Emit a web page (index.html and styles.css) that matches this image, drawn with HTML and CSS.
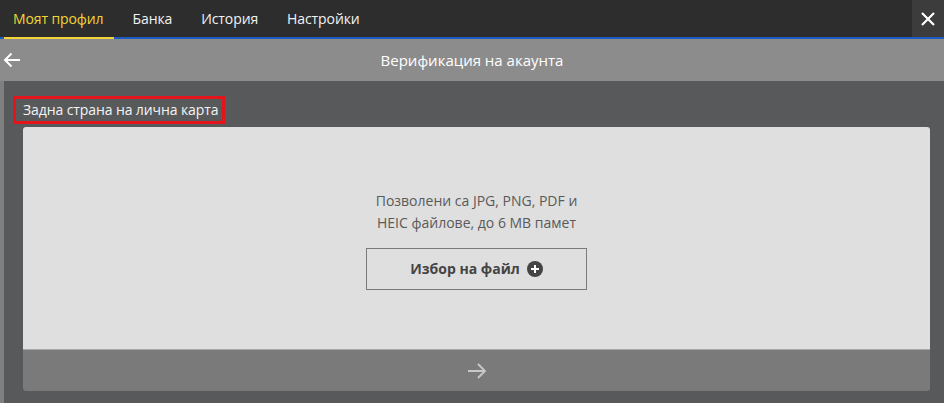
FILE: index.html
```html
<!DOCTYPE html>
<html lang="bg">
<head>
    <meta charset="UTF-8">
    <meta name="viewport" content="width=device-width, initial-scale=1.0">
    <title>Верификация на акаунта</title>
    <link rel="stylesheet" href="styles.css">
</head>
<body>
    <nav class="tabs">
        <a href="#" class="tab active">Моят профил</a>
        <a href="#" class="tab">Банка</a>
        <a href="#" class="tab">История</a>
        <a href="#" class="tab">Настройки</a>
        <button class="close" aria-label="Затвори">
            <svg width="14" height="14" viewBox="0 0 14 14"><path d="M1 1L13 13M13 1L1 13" stroke="#fff" stroke-width="2.2" fill="none"/></svg>
        </button>
    </nav>

    <header class="title-bar">
        <button class="back" aria-label="Назад">
            <svg width="18" height="16" viewBox="0 0 18 16"><path d="M17 8H2M8.5 1.5L2 8l6.5 6.5" stroke="#fff" stroke-width="2" fill="none"/></svg>
        </button>
        <h1>Верификация на акаунта</h1>
    </header>

    <main class="content">
        <div class="label">Задна страна на лична карта</div>
        <section class="upload">
            <div class="drop">
                <p>Позволени са JPG, PNG, PDF и<br>HEIC файлове, до 6 MB памет</p>
                <button class="pick">
                    Избор на файл
                    <svg width="16" height="16" viewBox="0 0 16 16"><circle cx="8" cy="8" r="8" fill="#444"/><path d="M8 4v8M4 8h8" stroke="#fff" stroke-width="2"/></svg>
                </button>
            </div>
            <div class="next">
                <svg width="20" height="18" viewBox="0 0 20 18"><path d="M1 9h17M11 2l7 7-7 7" stroke="#c9c9c9" stroke-width="1.8" fill="none"/></svg>
            </div>
        </section>
    </main>
</body>
</html>
```
FILE: styles.css
```css
body {
    font-family: "Open Sans", "Noto Sans", sans-serif;
    background-color: #58595b;
    margin: 0;
    padding: 0;
    height: 403px;
    overflow: hidden;
}
.tabs {
    display: flex;
    align-items: stretch;
    gap: 10px;
    height: 37px;
    padding-left: 4px;
    background-color: #2d2d2d;
    border-bottom: 2px solid #1b5cc4;
}
.tab {
    display: flex;
    align-items: center;
    padding: 0 10px 0 9px;
    color: #f2f2f2;
    text-decoration: none;
    font-size: 14px;
    letter-spacing: -0.1px;
    position: relative;
}
.tab.active {
    color: #f2d438;
}
.tab.active::after {
    content: "";
    position: absolute;
    left: 0;
    right: 0;
    bottom: -2px;
    height: 2px;
    background-color: #f2d438;
}
.close {
    margin-left: auto;
    width: 32px;
    background-color: #3c3c3c;
    border: none;
    padding: 0;
    display: flex;
    align-items: center;
    justify-content: center;
    cursor: pointer;
}
.title-bar {
    position: relative;
    height: 42px;
    background-color: #8c8c8c;
    display: flex;
    align-items: center;
    justify-content: center;
}
.title-bar h1 {
    margin: 0;
    font-size: 15px;
    font-weight: normal;
    color: #fff;
}
.back {
    position: absolute;
    left: 3px;
    top: 13px;
    background: none;
    border: none;
    padding: 0;
    cursor: pointer;
}
.content {
    border-left: 4px solid #7f7f7f;
    padding: 15px 14px 12px 9px;
}
.label {
    display: inline-block;
    border: 3px solid #e3141c;
    padding: 2px 4px 2px 7px;
    color: #f4f4f4;
    font-size: 14px;
    line-height: 18px;
    letter-spacing: -0.1px;
}
.upload {
    margin: 3px 0 0 10px;
    border-radius: 3px;
    overflow: hidden;
}
.drop {
    box-sizing: border-box;
    height: 222px;
    padding-top: 3px;
    background-color: #dfdfdf;
    display: flex;
    flex-direction: column;
    align-items: center;
    justify-content: center;
}
.drop p {
    margin: 0 0 14px;
    text-align: center;
    font-size: 14px;
    line-height: 22px;
    color: #5a5a5a;
}
.pick {
    width: 221px;
    height: 42px;
    background: none;
    border: 1px solid #7a7a7a;
    font-family: inherit;
    font-size: 14px;
    font-weight: bold;
    color: #444;
    display: flex;
    align-items: center;
    justify-content: center;
    gap: 7px;
    cursor: pointer;
}
.next {
    height: 41px;
    background-color: #7a7a7a;
    border-top: 1px solid #a8a8a8;
    display: flex;
    align-items: center;
    justify-content: center;
}
```
